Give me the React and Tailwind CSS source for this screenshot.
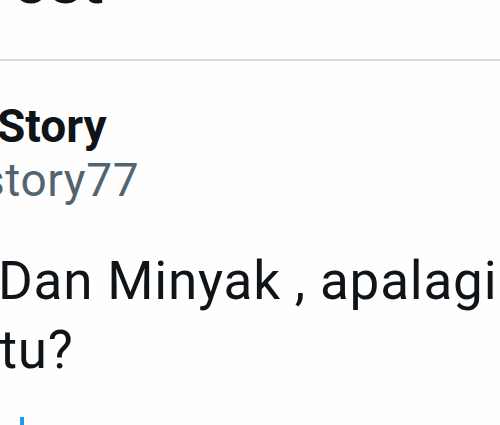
export default function App() {
  return (
    <div className="w-[500px] h-[425px] overflow-hidden bg-[#fefefe] text-[#0f1419]" style={{ fontFamily: 'Roboto, sans-serif' }}>
      <div className="h-[61px] border-b-2 border-[#d9d9d9] overflow-hidden">
        <div className="-mt-[50px] ml-[-28px] text-[64px] font-bold leading-[64px]">Post</div>
      </div>
      <div className="ml-[-3px] mt-[38px] flex flex-col">
        <span className="text-[46px] font-bold leading-[54px]">Story</span>
        <span className="-ml-[58px] text-[46px] leading-[54px] tracking-[0.6px] text-[#536471]">@story77</span>
      </div>
      <p className="mt-[40px] ml-[-2px] text-[53px] leading-[69px] tracking-[0.8px] whitespace-nowrap">
        <span className="block">Dan Minyak , apalagi</span>
        <span className="block -ml-[12px]">itu?</span>
      </p>
      <div className="mt-[32px] ml-[20px] h-[12px] w-[4px] bg-[#1d9bf0]" />
    </div>
  );
}
